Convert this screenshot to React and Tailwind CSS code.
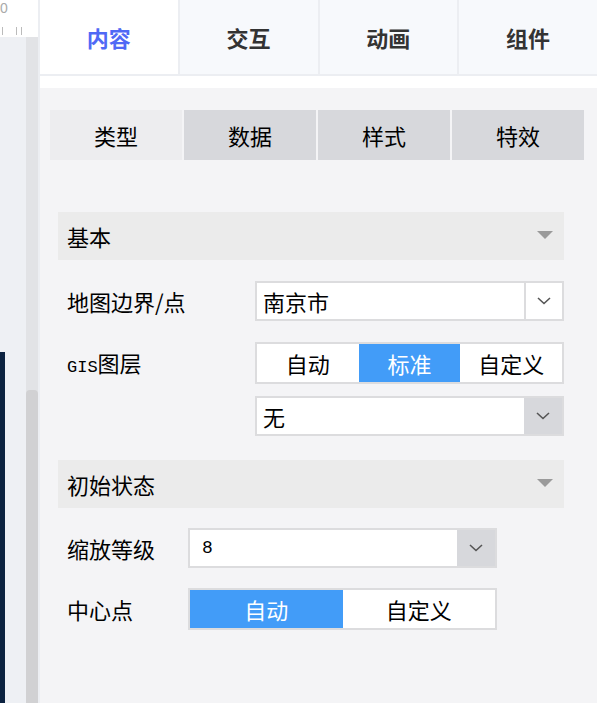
import React from 'react';

const font = "font-['Noto_Sans_CJK_SC',sans-serif]";

const Chevron = () => (
  <svg width="16" height="10" viewBox="0 0 16 10" fill="none">
    <path d="M2 2 L8 7.5 L14 2" stroke="#555" strokeWidth="1.6" />
  </svg>
);

const Triangle = () => (
  <svg width="16" height="10" viewBox="0 0 16 10">
    <path d="M0 0 H16 L8 8 Z" fill="#9a9a9a" />
  </svg>
);

const Section = ({ title }) => (
  <div className="ml-[18px] mr-[33px] h-[48px] bg-[#ebebeb] flex items-center justify-between pl-[9px] pr-[11px]">
    <span className="text-[22px] text-black">{title}</span>
    <Triangle />
  </div>
);

const Select = ({ value, width, grey, mono }) => (
  <div className={`flex h-[40px] border-2 border-[#dcdcde] bg-white ${width}`}>
    <div className={`flex-1 flex items-center pl-[6px] ${mono ? "font-['Liberation_Mono',monospace] text-[18px] pl-[12px]" : 'text-[22px]'}`}>{value}</div>
    <div className={`w-[38px] flex items-center justify-center ${grey ? 'bg-[#d7d8dc]' : 'border-l-2 border-[#dcdcde]'}`}>
      <Chevron />
    </div>
  </div>
);

const Segment = ({ items, active, width }) => (
  <div className={`flex h-[42px] border-2 border-[#dcdcde] bg-white ${width}`}>
    {items.map((it, i) => (
      <div
        key={it}
        className={`flex-1 flex items-center justify-center text-[22px] ${i === active ? 'bg-[#429cf8] text-white' : 'text-black'}`}
      >
        {it}
      </div>
    ))}
  </div>
);

export default function App() {
  const tabs = ['内容', '交互', '动画', '组件'];
  const sub = ['类型', '数据', '样式', '特效'];
  return (
    <div className={`flex w-[597px] h-[703px] overflow-hidden bg-[#f4f4f6] ${font}`}>
      {/* left strip */}
      <div className="w-[38px] flex flex-col">
        <div className="h-[37px] bg-white relative overflow-hidden">
          <span className="absolute left-0 top-0 text-[14px] leading-[16px] text-[#aaa] font-['Liberation_Sans',sans-serif]">0</span>
          <div className="absolute left-[2px] top-[27px] w-px h-[8px] bg-[#bbb]" />
          <div className="absolute left-[16px] top-[27px] w-px h-[8px] bg-[#bbb]" />
          <div className="absolute left-[21px] top-[27px] w-px h-[8px] bg-[#bbb]" />
        </div>
        <div className="flex-1 flex">
          <div className="w-[26px] bg-[#eef0f4] flex flex-col">
            <div className="h-[315px]" />
            <div className="flex-1 w-[5px] bg-[#0b2240]" />
          </div>
          <div className="w-[12px] bg-[#e2e3e6] flex flex-col">
            <div className="h-[353px]" />
            <div className="flex-1 bg-[#d1d1d3] rounded-t-[4px]" />
          </div>
        </div>
      </div>

      {/* panel */}
      <div className="flex-1 flex flex-col border-l-2 border-[#eceef2]">
        <div className="flex h-[76px] bg-[#f7f9fc] border-b-2 border-[#eceef2]">
          {tabs.map((t, i) => (
            <div
              key={t}
              className={`flex-1 flex items-center justify-center text-[22px] font-bold border-r-2 border-[#eceef2] last:border-r-0 ${i === 0 ? 'bg-white text-[#5069f5]' : 'text-[#333]'}`}
            >
              {t}
            </div>
          ))}
        </div>
        <div className="h-[12px] bg-white" />

        <div className="flex gap-[2px] ml-[10px] mr-[13px] mt-[22px] h-[50px]">
          {sub.map((t, i) => (
            <div
              key={t}
              className={`flex-1 flex items-center justify-center text-[22px] text-black ${i === 0 ? 'bg-[#ededef]' : 'bg-[#d7d8dc]'}`}
            >
              {t}
            </div>
          ))}
        </div>

        <div className="h-[52px]" />
        <Section title="基本" />

        <div className="flex items-center mt-[21px] pl-[27px] h-[40px]">
          <span className="w-[188px] text-[22px]">地图边界/点</span>
          <Select value="南京市" width="w-[309px]" />
        </div>
        <div className="flex items-center mt-[21px] pl-[27px] h-[42px]">
          <span className="w-[188px] text-[22px]">
            <span className="font-['Liberation_Mono',monospace] text-[17px]">GIS</span>图层
          </span>
          <Segment items={['自动', '标准', '自定义']} active={1} width="w-[309px]" />
        </div>
        <div className="flex items-center mt-[12px] pl-[215px] h-[40px]">
          <Select value="无" width="w-[309px]" grey />
        </div>

        <div className="h-[24px]" />
        <Section title="初始状态" />

        <div className="flex items-center mt-[20px] pl-[27px] h-[40px]">
          <span className="w-[121px] text-[22px]">缩放等级</span>
          <Select value="8" width="w-[309px]" grey mono />
        </div>
        <div className="flex items-center mt-[20px] pl-[27px] h-[42px]">
          <span className="w-[121px] text-[22px]">中心点</span>
          <Segment items={['自动', '自定义']} active={0} width="w-[309px]" />
        </div>
      </div>
    </div>
  );
}
